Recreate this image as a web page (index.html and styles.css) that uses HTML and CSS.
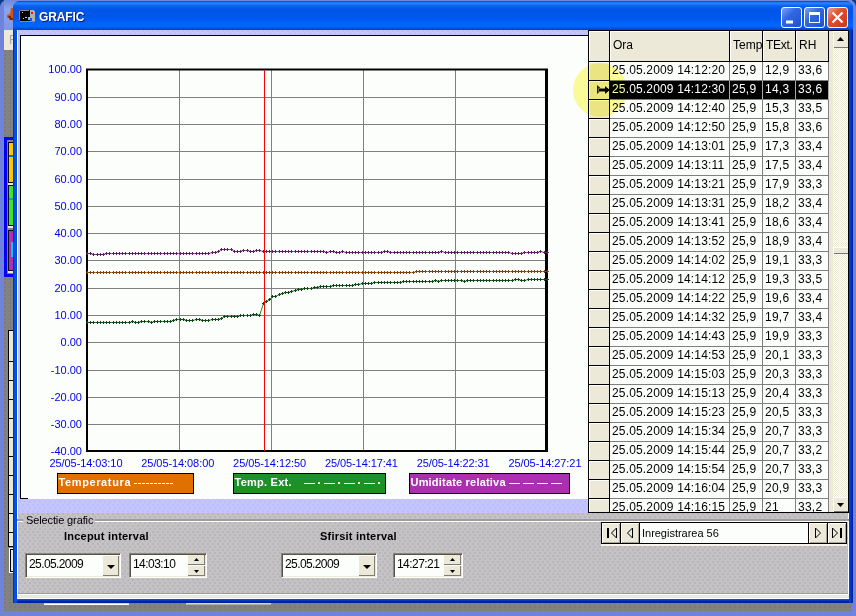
FILE: index.html
```html
<!DOCTYPE html>
<html lang="ro">
<head>
<meta charset="utf-8">
<title>GRAFIC</title>
<link rel="stylesheet" href="styles.css">
</head>
<body>
<div class="desktop">
  <div class="parent">
    <div class="parent-title"><svg width="12" height="18" viewBox="0 0 12 18"><path d="M6 2l2 0 1 3 3 0v10H8l-2-3H2V9l3-1z" fill="#d9500c"/><path d="M3 10h3v2h5v2H5" fill="#7a2408"/></svg></div>
    <div class="parent-menu">F</div>
    <div class="parent-body"></div>
  </div>
  <div class="under gauges">
    <i class="amber"></i><i class="green"></i><i class="purple"></i>
  </div>
  <div class="under sidegrid"></div>
  <div class="under sidebox"></div>
  <div class="under foot foot-a"></div>
  <div class="under foot foot-b"></div>

  <div class="window">
    <header class="titlebar">
      <svg class="appicon" width="17" height="14" viewBox="0 0 17 14" shape-rendering="crispEdges"><path d="M1 1h10v11H1z" fill="#000"/><path d="M0 2h1v9H0zM1 1h9v1H1zM1 12h15v1H1z" fill="#888"/><path d="M11 1h4l1 2v9h-3V9h-2v2H9V8h2z" fill="#b0b0b0"/><path d="M12 3h2v2h-2z" fill="#d02030"/><path d="M3 3h1v1H3zM6 8h2v1H6zM4 9h1v1H4z" fill="#ccc"/></svg>
      <h1>GRAFIC</h1>
      <div class="caption">
        <button class="cap"><svg width="19" height="19"><path d="M4 14h7" stroke="#fff" stroke-width="3"/></svg></button>
        <button class="cap"><svg width="19" height="19" shape-rendering="crispEdges"><path d="M4 4h11v11H4zM5 7v7h9V7z" fill="#fff" fill-rule="evenodd"/></svg></button>
        <button class="cap close"><svg width="19" height="19"><path d="M4.500 4.500l10 10M14.500 4.500l-10 10" stroke="#fff" stroke-width="2.200"/></svg></button>
      </div>
    </header>
    <main class="client">
      <div class="upper">
        <section class="plot"><div class="sheet"><svg id="chart" width="567" height="463" viewBox="21 36 567 463"></svg></div></section>
        <section class="records">
          <div class="table" id="table"></div>
          <div class="gutter"></div>
          <div class="scroll">
            <div class="sbtn"><svg width="14" height="15"><path d="M4 10h7L7.500 6z"/></svg></div>
            <div class="thumb"></div>
            <div class="sbtn end"><svg width="14" height="14"><path d="M4 6h7l-3.500 4z"/></svg></div>
          </div>
        </section>
      </div>
      <section class="lower">
        <div class="legend"><span>Selectie grafic</span></div>
        <div class="controls">
          <div class="interval first">
            <b>Inceput interval</b>
            <div class="fields">
              <div class="field date"><span>25.05.2009</span><i class="drop"><svg width="16" height="19"><path d="M4 9h8l-4 4z"/></svg></i></div>
              <div class="field time"><span>14:03:10</span><i class="spin"><svg width="17" height="10"><path d="M6 6h5L8.500 3z"/></svg><svg width="17" height="10"><path d="M6 4h5L8.500 7z"/></svg></i></div>
            </div>
          </div>
          <div class="interval second">
            <b>Sfirsit interval</b>
            <div class="fields">
              <div class="field date"><span>25.05.2009</span><i class="drop"><svg width="16" height="19"><path d="M4 9h8l-4 4z"/></svg></i></div>
              <div class="field time short"><span>14:27:21</span><i class="spin"><svg width="17" height="10"><path d="M6 6h5L8.500 3z"/></svg><svg width="17" height="10"><path d="M6 4h5L8.500 7z"/></svg></i></div>
            </div>
          </div>
          <div class="nav">
            <i><svg width="18" height="20"><path d="M6 5v10" stroke-width="2"/><path d="M14.500 5v10l-5-5z"/></svg></i>
            <i><svg width="18" height="20"><path d="M11.500 5v10l-5-5z"/></svg></i>
            <span>Inregistrarea 56</span>
            <i><svg width="18" height="20"><path d="M6.500 5v10l5-5z"/></svg></i>
            <i><svg width="18" height="20"><path d="M4.500 5v10l5-5z"/><path d="M13 5v10" stroke-width="2"/></svg></i>
          </div>
        </div>
      </section>
      <div class="status"></div>
    </main>
  </div>
  <div class="halo"></div>
</div>
<script src="script.js"></script>
</body>
</html>
```
FILE: styles.css
```css
* { box-sizing: border-box; }
body { margin: 0; overflow: hidden; font: 11px "Liberation Sans", Arial, sans-serif; color: #000; }
i { font-style: normal; }
svg { display: block; }
.desktop { position: relative; width: 856px; height: 616px; background: #0b3a86; overflow: hidden; }

.parent { position: absolute; inset: 0; display: flex; flex-direction: column; border: solid #7083dc; border-width: 0 4px 5px 4px; border-radius: 7px 7px 0 0; background: #7d97e4; box-shadow: inset 0 -1px #4c5cc0; }
.parent-title { height: 30px; padding: 6px 0 0 1px; background: linear-gradient(#7088dc, #8aa4ec 30%, #7d97e4); }
.parent-menu { height: 20px; background: #ece9d8; color: #aaa799; padding: 3px 0 0 5px; font-size: 12px; }
.parent-body { flex: 1; background-color: #828282; background-image: radial-gradient(circle at 1px 1px, #747270 .6px, transparent .8px); background-size: 5px 4px; }
.under { position: absolute; }
.gauges { left: 4px; top: 137px; width: 20px; height: 140px; border: 3px solid #0000fa; background: #828282; padding: 2px 0 0 1px; display: flex; flex-direction: column; gap: 2px; }
.gauges i { border: 1px solid #000; box-shadow: 0 2px #ece9d8; }
.amber { height: 41px; background: linear-gradient(#f8c800 12px, #1070c0 12px 14px, #f8c800 14px); }
.green { height: 41px; background: linear-gradient(#38e830 12px, #2098b8 12px 14px, #38e830 14px); }
.purple { height: 41px; margin-top: 2px; background: linear-gradient(90deg, #aa30b8 2px, transparent 2px), linear-gradient(#aa30b8 11px, #00c8ff 11px 26px, #aa30b8 26px); }
.sidegrid { left: 8px; top: 330px; width: 10px; height: 217px; border: 1px solid #000; background: linear-gradient(#ece9d8, #ece9d8) 0 0 / 100% 29px no-repeat, linear-gradient(transparent 18px, #000 18px) 0 12px / 100% 19px, #ece9d8; }
.sidebox { left: 9px; top: 548px; width: 10px; height: 25px; border: 1px solid #fff; background: #ece9d8; box-shadow: inset 0 0 0 1px #000; }
.foot { top: 600px; height: 5px; background: #d8d5c5; border-bottom: 1px solid #fff; }
.foot-a { left: 44px; width: 85px; }
.foot-b { left: 186px; width: 85px; border-bottom-color: #b0aea6; }

.window { position: absolute; left: 13px; top: 1px; width: 840px; height: 602px; display: flex; flex-direction: column; padding: 0 4px 4px 4px; border-radius: 7px 7px 0 0; background: linear-gradient(90deg, #0024b8, #0058f0 2px, #0048e0 4px, transparent 4px), linear-gradient(270deg, #001a90, #0030c8 2px, #0048e8 4px, transparent 4px), linear-gradient(#0050e8 599px, #001ea0 600px); }
.titlebar { height: 29px; margin: 0 -4px; padding: 0 5px 0 6px; display: flex; align-items: center; border-radius: 7px 7px 0 0; background: linear-gradient(#0040c8, #2a88ff 2px, #0860f0 5px, #0055e5 9px, #0058ee 17px, #0066ff 24px, #0060f8 26px, #0040c8); }
.titlebar h1 { flex: 1; margin: 3px 0 0 3px; font: bold 12px "Liberation Sans", Arial, sans-serif; color: #fff; text-shadow: 1px 1px #0a1883; letter-spacing: -.1px; }
.caption { display: flex; gap: 2px; margin-top: 3px; }
.cap { width: 21px; height: 21px; padding: 0; border: 1px solid #fff; border-radius: 3px; background: linear-gradient(135deg, #7ba0f4, #3068e0 40%, #2050d0); }
.close { background: linear-gradient(135deg, #f0a088, #e0502c 40%, #c03c18); }

.client { flex: 1; display: flex; flex-direction: column; min-height: 0; background: #c4c2c6; }
.upper { height: 483px; display: flex; }
.plot { width: 571px; padding: 5px 0 14px 3px; background-color: #c6c3ff; background-image: radial-gradient(circle at 1px 1px, #9fc0f4 .6px, transparent .8px), radial-gradient(circle at 3px 4px, #9fc0f4 .6px, transparent .8px); background-size: 5px 6px; box-shadow: inset 1px 0 #fff; }
.sheet { height: 464px; border-top: 1px solid #000; border-left: 1px solid #000; background: #fcfefc; }
#chart text { font-family: "Liberation Sans", Arial, sans-serif; font-size: 11px; fill: #0000e6; }
#chart .key { font-weight: bold; fill: #fff; }

.records { width: 261px; display: flex; border: 1px solid #000; background: #ece9d8; overflow: hidden; }
.table { width: 240px; height: 481px; overflow: hidden; font-size: 12px; }
.row { display: grid; grid-template-columns: 21px 120px 33px 33px 33px; height: 19px; }
.row > * { border-right: 1px solid #808080; border-bottom: 1px solid #808080; background: #fcfefc; padding-left: 2px; line-height: 17px; white-space: nowrap; overflow: hidden; letter-spacing: .16px; }
.row > *:nth-child(n+3) { letter-spacing: .25px; }
.row .sel, .row.head > * { background: #ece9d8; border-color: #000; box-shadow: inset 1px 1px #fff; }
.row.head { height: 31px; }
.row.head > * { line-height: 29px; padding-left: 3px; letter-spacing: 0; }
.row.head > :nth-child(4) { letter-spacing: -.3px; }
.row.current > :not(.sel) { background: #000; color: #fff; border-right-color: #aaa; }
.row:last-child { height: 13px; }
.row:last-child > * { border-bottom: 0; padding-top: 4px; line-height: 9px; overflow: visible; }
.sel svg { margin: 3px 0 0 4px; }
.gutter { width: 4px; }
.scroll { width: 15px; display: flex; flex-direction: column; background: repeating-conic-gradient(#fff 0 25%, #ece9d8 0 50%) 0 0 / 2px 2px; }
.sbtn { height: 17px; background: #ece9d8; box-shadow: inset 1px 1px #fff, inset 0 -1px #777; }
.thumb { height: 7px; margin-top: 199px; background: #ece9d8; box-shadow: inset 1px 1px #fff, inset 0 -1px #777; }
.end { margin-top: auto; height: 15px; }

.lower { height: 81px; display: flex; flex-direction: column; background-color: #c4c2c6; background-image: radial-gradient(circle at 1px 1px, #aca99f .6px, transparent .8px), radial-gradient(circle at 3px 4px, #aca99f .6px, transparent .8px); background-size: 5px 6px; box-shadow: inset 1px 0 #fff, inset -1px 0 #fff, inset 0 -1px #a09d98; }
.legend { height: 12px; display: flex; align-items: flex-start; }
.legend::before, .legend::after { content: ""; height: 2px; margin-top: 6px; background: #a09d98; border-bottom: 1px solid #fff; }
.legend::before { width: 6px; }
.legend::after { flex: 1; }
.legend span { width: 72px; padding-left: 3px; line-height: 14px; letter-spacing: -.12px; white-space: nowrap; }
.controls { flex: 1; display: flex; }
.interval { display: flex; flex-direction: column; padding-top: 4px; }
.interval b { height: 14px; padding-left: 39px; line-height: 14px; letter-spacing: .22px; }
.first { width: 256px; padding-left: 8px; }
.second { width: 328px; padding-left: 8px; }
.fields { display: flex; gap: 8px; margin-top: 10px; }
.field { width: 96px; height: 25px; display: flex; justify-content: space-between; padding: 1px; border: 1px solid; border-color: #8a8778 #fff #fff #8a8778; background: #fcfefc; box-shadow: inset 1px 1px #55534c, inset -1px -1px #ece9d8; }
.field span { padding-left: 2px; font-size: 12px; line-height: 18px; letter-spacing: -.6px; }
.field.time { width: 78px; }
.field.short { width: 70px; }
.field.time span { letter-spacing: -.55px; }
.drop { width: 16px; height: 20px; margin: 1px 0 0; background: #ece9d8; border: solid #807d70; border-width: 0 1px 1px 0; }
.spin { width: 17px; display: flex; flex-direction: column; gap: 1px; }
.spin svg { background: #ece9d8; border-bottom: 1px solid #807d70; border-right: 1px solid #807d70; }
.second .fields { gap: 16px; }
.nav { display: flex; width: 246px; height: 22px; margin: -3px 0 0; border: 1px solid #000; background: #fcfefc; box-shadow: 0 2px #f6f4ea; }
.nav i { width: 19px; background: #ece9d8; border-right: 1px solid #000; box-shadow: inset 1px 1px #fff, inset -1px -1px #aaa798; }
.nav i:last-child { border-right: 0; width: 18px; }
.nav span { flex: 1; border-right: 1px solid #000; padding-left: 2px; line-height: 21px; letter-spacing: -.02px; }
.nav svg path { fill: none; stroke: #000; }
.status { flex: 1; background: #ece9d8; border-top: 1px solid #fff; border-bottom: 1px solid #fff; }
.halo { position: absolute; left: 573px; top: 63px; width: 54px; height: 54px; border-radius: 50%; background: #fdfb9a; mix-blend-mode: multiply; }
```
FILE: script.js
```js
// Plot frame: 100 at y=69.5, -40 at y=451.
const parts = [];
const gridX = [179, 271, 363, 455];
const gridY = [97, 124, 151, 179, 206, 233, 260, 288, 315, 342, 370, 397, 424];
gridX.forEach(x => parts.push(`<path d="M${x + .5} 70V451" stroke="#808080"/>`));
gridY.forEach(y => parts.push(`<path d="M87 ${y + .5}H547" stroke="#808080"/>`));
[69, ...gridY, 451].forEach((y, i) => {
  parts.push(`<text x="82" y="${y + 4}" text-anchor="end">${(100 - i * 10).toFixed(2)}</text>`);
});
['14:03:10', '14:08:00', '14:12:50', '14:17:41', '14:22:31', '14:27:21'].forEach((t, i) => {
  parts.push(`<text x="${49.5 + i * 91.8}" y="467" textLength="73">25/05-${t}</text>`);
});
parts.push('<path d="M86 69.500H548M86 451H548" stroke="#000" stroke-width="2"/><path d="M87 69V452" stroke="#000" stroke-width="2"/><path d="M546.500 69V452" stroke="#000" stroke-width="3"/>');

// Each pair holds the last x of a run and its level.
const series = [
  ['#b838c0', '#5c2060', [[91,253],[104,254],[210,253],[217,252],[220,251],[231,249],[233,250],[240,251],[247,250],[255,251],[259,250],[324,251],[327,252],[333,251],[340,252],[343,251],[382,252],[389,251],[438,252],[444,251],[509,252],[523,253],[539,252],[541,251],[548,252]]],
  ['#f08000', '#804010', [[414,272],[548,271]]],
  ['#1e9028', '#104818', [[130,322],[133,321],[139,322],[149,321],[152,322],[172,321],[175,320],[185,319],[192,320],[201,319],[211,320],[220,319],[223,318],[237,316],[250,315],[257,314],[259,315],[262,307],[265,303],[268,301],[271,299],[275,296],[278,295],[281,294],[284,293],[288,292],[292,291],[297,290],[303,289],[311,288],[317,287],[331,286],[353,285],[360,284],[373,283],[401,282],[434,281],[437,280],[440,281],[461,280],[464,281],[512,280],[519,279],[526,280],[548,279]]]
];
series.forEach(([line, mark, runs]) => {
  const pts = [];
  for (let i = 0; i <= 144; i++) {
    const x = Math.round(87 + i * 3.193);
    pts.push([x, (runs.find(r => x <= r[0]) || runs[runs.length - 1])[1]]);
  }
  parts.push(`<polyline fill="none" stroke="${line}" points="${pts.map(p => `${p[0] + .5},${p[1] + .5}`).join(' ')}"/>`);
  parts.push(`<path shape-rendering="crispEdges" stroke="${mark}" d="${pts.map(p => `M${p[0] - 1} ${p[1] + .5}h3M${p[0] + .5} ${p[1] - 1}v3`).join('')}"/>`);
});
parts.push('<path d="M264.500 70V451" stroke="#ff0000"/>');

[[57, 137, '#e07000', 'Temperatura', 72], [233, 153, '#1e9028', 'Temp. Ext.', 57], [409, 161, '#aa30b0', 'Umiditate relativa', 95]].forEach(([x, w, c, t, len]) => {
  parts.push(`<rect x="${x + .5}" y="473.500" width="${w - 1}" height="20" fill="${c}" stroke="#000"/><text class="key" x="${x + 1.5}" y="486" textLength="${len}">${t}</text>`);
});
parts.push('<path d="M134 483.500H174" stroke="#fff" stroke-dasharray="3 1"/>');
parts.push('<path d="M304 483.500h11m9 0h11m9 0h11m9 0h11" stroke="#fff"/><path d="M318 483h2m18 0h2m18 0h2m18 0h2" stroke="#fff" stroke-width="2"/>');
parts.push('<path d="M509 483.500h11m3 0h11m3 0h11m3 0h11" stroke="#fff"/>');
parts.push('<path d="M21 498.500h7" stroke="#000"/>');
document.getElementById('chart').innerHTML = parts.join('');

const rows = [
  ['12:20','12,9','33,6'],['12:30','14,3','33,6'],['12:40','15,3','33,5'],['12:50','15,8','33,6'],
  ['13:01','17,3','33,4'],['13:11','17,5','33,4'],['13:21','17,9','33,3'],['13:31','18,2','33,4'],
  ['13:41','18,6','33,4'],['13:52','18,9','33,4'],['14:02','19,1','33,3'],['14:12','19,3','33,5'],
  ['14:22','19,6','33,4'],['14:32','19,7','33,4'],['14:43','19,9','33,3'],['14:53','20,1','33,3'],
  ['15:03','20,3','33,3'],['15:13','20,4','33,3'],['15:23','20,5','33,3'],['15:34','20,7','33,3'],
  ['15:44','20,7','33,2'],['15:54','20,7','33,3'],['16:04','20,9','33,3'],['16:15','21','33,2']
];
const arrow = '<svg width="16" height="12" viewBox="0 0 16 12"><path d="M2 1l5 4.500L2 10z" fill="#222"/><path d="M4 4.500h6V2l5 4-5 4V7.500H4z" fill="#000" stroke="#fff" stroke-width=".8" paint-order="stroke"/></svg>';
document.getElementById('table').innerHTML =
  '<div class="row head"><span></span><span>Ora</span><span>Temp</span><span>TExt.</span><span>RH</span></div>' +
  rows.map((r, i) => `<div class="row${i === 1 ? ' current' : ''}"><span class="sel">${i === 1 ? arrow : ''}</span><span>25.05.2009 14:${r[0]}</span><span>25,9</span><span>${r[1]}</span><span>${r[2]}</span></div>`).join('');
```
